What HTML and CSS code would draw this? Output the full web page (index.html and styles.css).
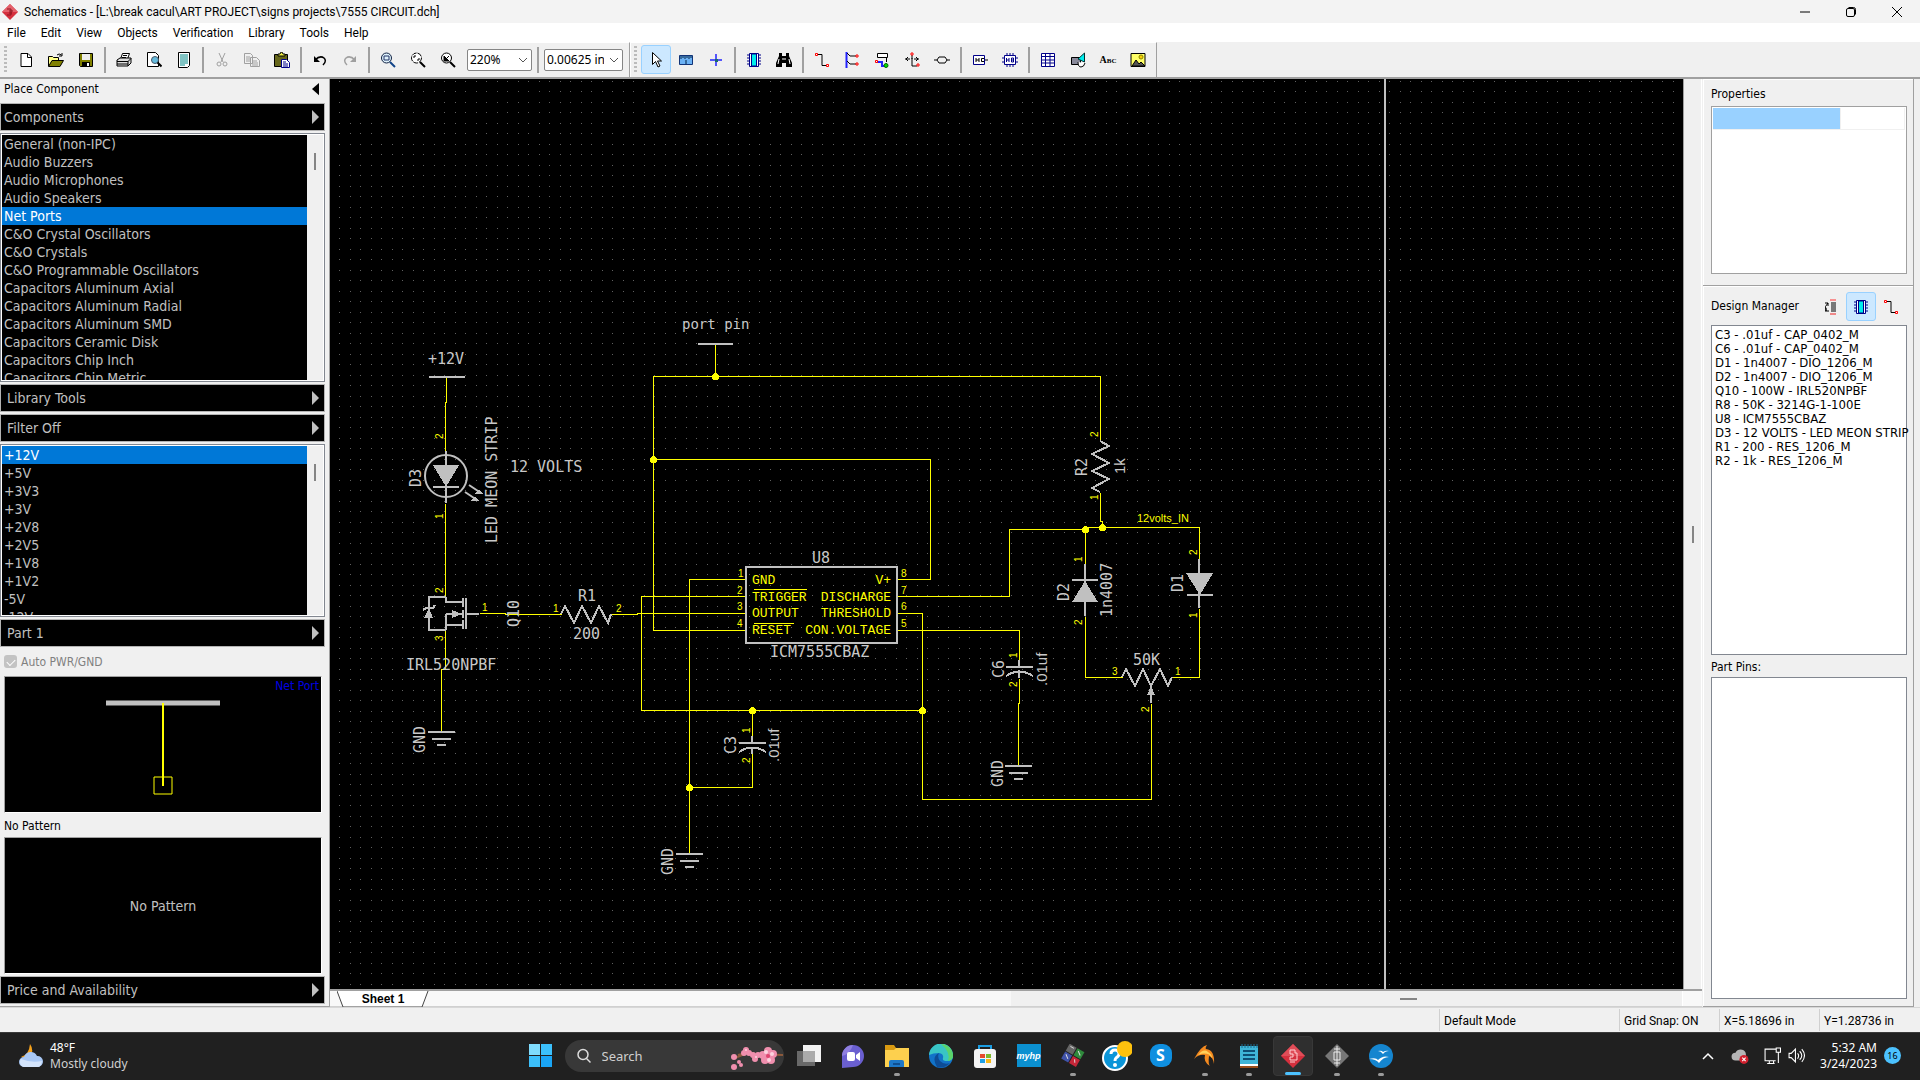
FILE: index.html
```html
<!DOCTYPE html>
<html lang="en">
<head>
<meta charset="utf-8">
<title>Schematics - 7555 CIRCUIT.dch</title>
<link rel="stylesheet" href="styles.css">
</head>
<body>
<header class="titlebar">
  <svg class="logo" viewBox="0 0 16 16"><path d="M8 0l8 8-8 8-8-8z" fill="#d5303e"/><path d="M8 0l8 8H0z" fill="#e4606a"/><path d="M5 5h4v6H5M7 7h4M7 9h3" fill="none" stroke="#8d1420"/></svg>
  <h1>Schematics - [L:\break cacul\ART PROJECT\signs projects\7555 CIRCUIT.dch]</h1>
  <div class="winctl">
    <button aria-label="Minimize"><svg viewBox="0 0 12 12"><path d="M1 6h10"/></svg></button>
    <button aria-label="Restore"><svg viewBox="0 0 12 12"><path d="M1.500 4q0-1.500 1.500-1.500h5q1.500 0 1.500 1.500v5q0 1.500-1.500 1.500h-5q-1.500 0-1.500-1.500zM3.500 1.500h5q2 0 2 2v5"/></svg></button>
    <button aria-label="Close"><svg viewBox="0 0 12 12"><path d="M1 1l10 10M11 1L1 11"/></svg></button>
  </div>
</header>
<nav class="menubar">
  <a href="#">File</a><a href="#">Edit</a><a href="#">View</a><a href="#">Objects</a><a href="#">Verification</a><a href="#">Library</a><a href="#">Tools</a><a href="#">Help</a>
</nav>
<div class="toolbars">
  <div class="toolbar">
    <i class="grip"></i>
    <button aria-label="New"><svg viewBox="0 0 16 16"><path d="M3 1.500h7l3.500 3.500v9.500H3z" fill="#fff" stroke="#000"/><path d="M9.500 1.500v4h4" fill="none" stroke="#000"/></svg></button>
    <button aria-label="Open"><svg viewBox="0 0 16 16"><path d="M.500 14V4.500h4l1 1h5V8" fill="#ff8" stroke="#000"/><path d="M.500 14.500L4 8.500h11.500l-3.500 6z" fill="#808000" stroke="#000"/><path d="M9 3q2-2 4.500 0M14 1v3h-3" fill="none" stroke="#000"/></svg></button>
    <button aria-label="Save"><svg viewBox="0 0 16 16"><path d="M1.500 1.500h13v13h-12l-1-1z" fill="#808000" stroke="#000"/><path d="M4 2h8v6H4z" fill="#eee"/><path d="M4 10h8v4H4z"/><path d="M9 11h2v3H9z" fill="#fff"/></svg></button>
    <i class="sep"></i>
    <button aria-label="Print"><svg viewBox="0 0 16 16"><path d="M4.500 7l2-5.500h7L11.500 7" fill="#fff" stroke="#000"/><path d="M1 8l3-2h11v5l-3 3H1z" fill="#ddd" stroke="#000"/><path d="M1 9.500h11l3-3M1 12h11M12 9v5M7 3.500h4M6 5.500h4" fill="none" stroke="#000"/></svg></button>
    <button aria-label="Print preview"><svg viewBox="0 0 16 16"><path d="M1.500.500h8l3 3v11h-11z" fill="#fff" stroke="#000"/><circle cx="9" cy="8" r="3.500" fill="#6bd" stroke="#456"/><path d="M11.500 10.500l4 4" stroke="#000" stroke-width="2"/></svg></button>
    <button aria-label="Titles"><svg viewBox="0 0 16 16"><path d="M2.500.500h11v13l-2 2h-9z" fill="#fff" stroke="#000"/><path d="M4 3h8M4 5h8M4 7h8M4 9h8M4 11h8M4 13h5" stroke="#088"/></svg></button>
    <i class="sep"></i>
    <button aria-label="Cut" disabled><svg viewBox="0 0 16 16"><g fill="none" stroke="#a0a0a0"><path d="M5 1l4 9M11 1L7 10"/><circle cx="5" cy="12" r="2"/><circle cx="11" cy="12" r="2"/></g></svg></button>
    <button aria-label="Copy" disabled><svg viewBox="0 0 16 16"><g fill="#f0f0f0" stroke="#a0a0a0"><path d="M.500 1.500h6l2 2v8h-8zM6.500 5.500h6l3 3v6h-9z"/><path d="M2 5h4M2 7h4M2 9h4M8 9h5M8 11h6M8 13h6"/></g></svg></button>
    <button aria-label="Paste"><svg viewBox="0 0 16 16"><path d="M.500 2.500h13v12H.500z" fill="#66661a" stroke="#000"/><path d="M4 4V2h2l1-2h1l1 2h2v2z" fill="#ee4" stroke="#000"/><path d="M7.500 7.500h5l3 3v5h-8z" fill="#fff" stroke="#008"/><path d="M9 10h3M9 12h5M9 14h5" stroke="#008"/></svg></button>
    <i class="sep"></i>
    <button aria-label="Undo"><svg viewBox="0 0 16 16"><path d="M3 8q5-5 9-2 3 3-1 7" fill="none" stroke="#000" stroke-width="1.500"/><path d="M2 4v6h6z"/></svg></button>
    <button aria-label="Redo" disabled><svg viewBox="0 0 16 16"><path d="M13 8q-5-5-9-2-3 3 1 7" fill="none" stroke="#a0a0a0" stroke-width="1.500"/><path d="M14 4v6H8z" fill="#a0a0a0"/></svg></button>
    <i class="sep"></i>
    <button aria-label="Zoom window"><svg viewBox="0 0 16 16"><circle cx="6.500" cy="6" r="5" fill="#dff2fb" stroke="#124"/><path d="M4 4h5v4H4z" fill="none" stroke="#236"/><path d="M10 10l5 5" stroke="#148" stroke-width="2"/></svg></button>
    <button aria-label="Zoom all"><svg viewBox="0 0 16 16"><circle cx="6.500" cy="6" r="5" fill="#fff" stroke="#000" stroke-dasharray="5 1"/><path d="M4 6V4h2M9 6v2H7" fill="none" stroke="#000"/><path d="M10 10l5 5" stroke="#000" stroke-width="2"/></svg></button>
    <button aria-label="Zoom previous"><svg viewBox="0 0 16 16"><circle cx="6.500" cy="6" r="5" fill="#fff" stroke="#000"/><path d="M4 4v5h5zM5 8l4-4" stroke="#000"/><path d="M10 10l5 5" stroke="#000" stroke-width="2"/></svg></button>
    <div class="combo zoomlevel"><select aria-label="Zoom"><option>220%</option></select><svg viewBox="0 0 10 6"><path d="M1 1l4 4 4-4"/></svg></div>
    <i class="sep"></i>
    <div class="combo gridstep"><select aria-label="Grid size"><option>0.00625 in</option></select><svg viewBox="0 0 10 6"><path d="M1 1l4 4 4-4"/></svg></div>
  </div>
  <div class="toolbar">
    <i class="grip"></i>
    <button class="on" aria-label="Select"><svg viewBox="0 0 16 16"><path d="M4.500.500v12l3-3 2.500 5.500 2-1-2.500-5h4z" fill="#fff" stroke="#000"/></svg></button>
    <button aria-label="Measure"><svg viewBox="0 0 16 16"><path d="M1.500 3.500h13v9h-13z" fill="#6cb2f5" stroke="#137"/><path d="M3 4v3M5 4v2M7 4v3M9 4v2M11 4v3M13 4v2M8 8v4" stroke="#024"/></svg></button>
    <button aria-label="Set origin"><svg viewBox="0 0 16 16"><path d="M2 8h12M8 2v12" stroke="#22f" stroke-width="1.500"/><path d="M7 7h3v3H7z" fill="#186b6b"/></svg></button>
    <i class="sep"></i>
    <button aria-label="Place component"><svg viewBox="0 0 16 16"><use href="#chip"/></svg></button>
    <button aria-label="Find component"><svg viewBox="0 0 16 16"><path d="M3 1h3v3h4V1h3v3l3 7v4h-6v-4H6v4H0v-4l3-7z"/><path d="M3 7l-1 5M13 7l1 5M7 6v2M9 6v2" stroke="#fff"/></svg></button>
    <i class="sep"></i>
    <button aria-label="Place wire"><svg viewBox="0 0 16 16"><use href="#wire"/></svg></button>
    <button aria-label="Place bus"><svg viewBox="0 0 16 16"><path d="M2.500 0v16" stroke="#22f" stroke-width="2"/><path d="M3 1l3 3h6M3 9l3 3h6" stroke="#000" fill="none"/><path d="M12 3h2v2h-2zM12 11h2v2h-2z" fill="#fff" stroke="red"/></svg></button>
    <button aria-label="Bus connection"><svg viewBox="0 0 16 16"><path d="M3.500 1.500h10v4h-10zM12.500 6v4" fill="#fff" stroke="#000"/><path d="M3 10h5v4h3" fill="none" stroke="#22f" stroke-width="2"/><path d="M1.500 8.500h2v2h-2z" fill="#fff" stroke="red"/><circle cx="12" cy="13.500" r="2" fill="#0d0" stroke="#060"/></svg></button>
    <button aria-label="Net port"><svg viewBox="0 0 16 16"><path d="M8 2v5M1 7h5M15 7h-5M8 6v8h5M4 5L2 7l2 2M12 5l2 2-2 2" fill="none" stroke="#000"/><path d="M7 1h2v2H7zM13 12h2v2h-2z" fill="#fff" stroke="red"/></svg></button>
    <button aria-label="Connector"><svg viewBox="0 0 16 16"><path d="M0 8h3l2-3h6l2 3h3M3 8l2 3h6l2-3" fill="none" stroke="#000"/></svg></button>
    <i class="sep"></i>
    <button aria-label="Hierarchy connector"><svg viewBox="0 0 16 16"><path d="M1.500 3.500h11v9h-11z" fill="#fff" stroke="#008"/><path d="M13 8h3M4 6v4M7 6v4M4 8h3M12 6.500H9.500v3H12" fill="none" stroke="#000"/></svg></button>
    <button aria-label="Hierarchy block"><svg viewBox="0 0 16 16"><path d="M2.500 3.500h11v9h-11z" fill="#fff" stroke="#008"/><path d="M5 1v2M8 1v2M11 1v2M5 13v2M8 13v2M11 13v2M0 6h2M0 10h2M14 6h2M14 10h2M4.500 6v4M7 6v4M4.500 8H7M9.500 6v4h2V6zM9 8h3" fill="none" stroke="#008"/></svg></button>
    <i class="sep"></i>
    <button aria-label="Table"><svg viewBox="0 0 16 16"><path d="M1.500 1.500h13v13h-13zM1.500 4.500h13M1.500 8h13M1.500 11h13M5.500 1.500v13M10 1.500v13" fill="#fff" stroke="#008"/></svg></button>
    <button aria-label="Shape"><svg viewBox="0 0 16 16"><path d="M1.500 5.500h9v7h-9z" fill="#889" stroke="#000"/><path d="M14.500 1v9L8 7z" fill="#0ee" stroke="#033"/><path d="M8 10q0 5 3 5t4-4" fill="#fff" stroke="#000"/></svg></button>
    <button class="abc">Abc</button>
    <button aria-label="Picture"><svg viewBox="0 0 16 16"><path d="M1 1.500h14v13H1z" fill="#ff6" stroke="#000"/><circle cx="11" cy="5" r="2" fill="#fc0" stroke="#880"/><path d="M2 14l4-6 3 4 2-2 4 4z" fill="#555" stroke="#000"/></svg></button>
  </div>
</div>

<main class="workspace">
  <aside class="place">
    <h2>Place Component <svg viewBox="0 0 8 14"><path d="M8 0v14L0 7z"/></svg></h2>
    <button class="drop first">Components<svg viewBox="0 0 7 14"><path d="M0 0l7 7-7 7z"/></svg></button>
    <div class="listbox libs">
      <ul role="listbox" aria-label="Components">
        <li>General (non-IPC)</li><li>Audio Buzzers</li><li>Audio Microphones</li><li>Audio Speakers</li><li class="sel">Net Ports</li><li>C&amp;O Crystal Oscillators</li><li>C&amp;O Crystals</li><li>C&amp;O Programmable Oscillators</li><li>Capacitors Aluminum Axial</li><li>Capacitors Aluminum Radial</li><li>Capacitors Aluminum SMD</li><li>Capacitors Ceramic Disk</li><li>Capacitors Chip Inch</li><li>Capacitors Chip Metric</li>
      </ul>
      <div class="track"><i></i></div>
    </div>
    <button class="drop">Library Tools<svg viewBox="0 0 7 14"><path d="M0 0l7 7-7 7z"/></svg></button>
    <button class="drop">Filter Off<svg viewBox="0 0 7 14"><path d="M0 0l7 7-7 7z"/></svg></button>
    <div class="listbox parts">
      <ul role="listbox" aria-label="Parts">
        <li class="sel">+12V</li><li>+5V</li><li>+3V3</li><li>+3V</li><li>+2V8</li><li>+2V5</li><li>+1V8</li><li>+1V2</li><li>-5V</li><li>-12V</li>
      </ul>
      <div class="track"><i></i></div>
    </div>
    <button class="drop">Part 1<svg viewBox="0 0 7 14"><path d="M0 0l7 7-7 7z"/></svg></button>
    <label class="auto"><input type="checkbox" checked disabled>Auto PWR/GND</label>
    <div class="preview symbol">
      <span>Net Port</span>
      <svg viewBox="0 0 120 96"><path d="M3 4h114" stroke="#c0c0c0" stroke-width="5"/><path d="M60 4v83" stroke="#ff0" stroke-width="2"/><path d="M51 78h18v17H51z" fill="none" stroke="#ff0"/></svg>
    </div>
    <p class="caption">No Pattern</p>
    <div class="preview pattern">No Pattern</div>
    <button class="drop last">Price and Availability<svg viewBox="0 0 7 14"><path d="M0 0l7 7-7 7z"/></svg></button>
  </aside>

  <section class="editor">
    <svg class="canvas" role="img" aria-label="7555 circuit schematic">
      <defs>
        <pattern id="dots" width="21" height="21" patternUnits="userSpaceOnUse">
          <path d="M3 7h1v1H3zM14 7h1v1h-1zM3 18h1v1H3zM14 18h1v1h-1z" fill="#606060"/>
        </pattern>
        <g id="chip"><path d="M1 3h14M1 6h14M1 9h14M1 12h14" stroke="#008" stroke-width="1"/><path d="M3.500 1.500h9v13h-9z" fill="#fff" stroke="#008"/><path d="M5.500 2h5v12h-5z" fill="#0ee" stroke="#008"/></g>
        <g id="wire"><path d="M3 2.500h5v11h5" fill="none" stroke="#000"/><path d="M1.500 1.500h2v2h-2zM12.500 12.500h2v2h-2z" fill="#fff" stroke="red"/></g>
        <g id="ground"><path d="M-13 0h27M-9 7h19M-4 13h9"/></g>
        <g id="cap"><path d="M0-7v7M-13 0h27M0 4v7"/><path d="M-13 9q13-9 27 0" fill="none"/></g>
      </defs>
      <g transform="translate(-330 -79)"><rect x="330" y="79" width="4000" height="3000" fill="url(#dots)"/></g>
      <g class="wires" transform="translate(-329.500 -78.500)">
        <path d="M446 377v25h-1v48M445 503v93M445 630v39h-4v62M479 613h26v1h56M611 614h26v-1h109"/>
        <path d="M715 344v32M746 630h-93V376h447v65M653 459h277v120h-33M746 579h-57v274M746 596h-105v114h281"/>
        <path d="M752 710v27M752 752v35h-63M897 596h112v-67h76v-2h114v32M1100 492v29h2v6M1085 529v35M1085 616v61h37M1172 677h27v-69"/>
        <path d="M897 613h25v186h229v-96M897 630h122v30M1019 678v25h-1v63"/>
        <path d="M753 589h53M753 623h40"/>
        <g class="dots"><circle cx="715" cy="376" r="3"/><circle cx="653" cy="459" r="3"/><circle cx="752" cy="710" r="3"/><circle cx="922" cy="710" r="3"/><circle cx="689" cy="787" r="3"/><circle cx="1085" cy="529" r="3"/><circle cx="1102" cy="527" r="3"/></g>
      </g>
      <g transform="translate(-330 -79)">
        <path class="edge" d="M1385 79v3000"/>
        <g class="symbols">
          <path d="M429 377h36M698 344h35"/>
          <path d="M446 451v52M433 487h26"/>
          <g class="smooth"><circle cx="446" cy="476" r="21"/><path d="M469 485l12 8M465 492l12 8"/></g>
          <path class="solid" d="M433 465h26l-13 22zM483 494l-8 0 4-5zM479 501l-8 0 4-5z"/>
          <path d="M446 597h-17v33h17M446 597v5h17M463 598v9M446 614v16M446 614h17M446 625h17M463 620v9M463 610v8M466 598v31M466 614h13"/>
          <path class="solid" d="M452 610v8l10-4zM429 608l-5 10h9z"/><path d="M423 610l3-2h7l2-3"/>
          <path d="M561 614l4-8 9 17 8-17 9 17 8-17 9 17 3-9"/>
          <path d="M746 567h151v76H746z"/>
          <path d="M1100 441l9 5-17 8 17 9-17 8 17 8-17 9 8 4"/>
          <path d="M1085 564v52M1072 580h26M1199 559v49M1187 595h26"/>
          <path class="solid" d="M1085 581l13 21h-26zM1186 573h27l-13 22z"/>
          <path d="M1122 677l4-8 9 17 8-17 8 17 9-17 8 17 4-9M1151 686v17"/><path class="solid" d="M1151 686l4 9h-8z"/>
          <use href="#ground" x="441" y="732"/><use href="#ground" x="689" y="854"/><use href="#ground" x="1018" y="766"/>
          <use href="#cap" x="752" y="743"/><use href="#cap" x="1019" y="667"/>
        </g>
        <g class="ref">
          <text x="428" y="364">+12V</text><text x="510" y="472">12 VOLTS</text><text x="578" y="601">R1</text><text x="573" y="639">200</text><text x="406" y="670">IRL520NPBF</text>
          <text class="port" x="682" y="329">port pin</text><text x="812" y="563">U8</text><text x="770" y="657">ICM7555CBAZ</text><text x="1133" y="665">50K</text>
          <text transform="translate(421 487) rotate(-90)">D3</text><text transform="translate(497 543) rotate(-90)">LED MEON STRIP</text><text transform="translate(519 627) rotate(-90)">Q10</text><text transform="translate(425 753) rotate(-90)">GND</text>
          <text transform="translate(736 754) rotate(-90)">C3</text><text class="val" transform="translate(779 762) rotate(-90)">.01uf</text><text transform="translate(673 875) rotate(-90)">GND</text>
          <text transform="translate(1087 476) rotate(-90)">R2</text><text class="val" transform="translate(1125 474) rotate(-90)">1k</text><text transform="translate(1069 601) rotate(-90)">D2</text><text transform="translate(1112 617) rotate(-90)">1n4007</text><text transform="translate(1183 592) rotate(-90)">D1</text>
          <text transform="translate(1004 678) rotate(-90)">C6</text><text class="val" transform="translate(1047 686) rotate(-90)">.01uf</text><text transform="translate(1003 787) rotate(-90)">GND</text>
        </g>
        <g class="pinname">
          <text x="752" y="584">GND</text><text x="752" y="601">TRIGGER</text><text x="752" y="617">OUTPUT</text><text x="752" y="634">RESET</text>
          <g text-anchor="end"><text x="891" y="584">V+</text><text x="891" y="601">DISCHARGE</text><text x="891" y="617">THRESHOLD</text><text x="891" y="634">CON.VOLTAGE</text></g>
        </g>
        <g class="pin">
          <text x="738" y="577">1</text><text x="737" y="594">2</text><text x="737" y="610">3</text><text x="737" y="627">4</text>
          <text x="901" y="577">8</text><text x="901" y="594">7</text><text x="901" y="610">6</text><text x="901" y="627">5</text>
          <text x="482" y="611">1</text><text x="553" y="612">1</text><text x="616" y="612">2</text><text x="1112" y="675">3</text><text x="1175" y="675">1</text><text class="net" x="1137" y="522">12volts_IN</text>
          <text transform="translate(443 439) rotate(-90)">2</text><text transform="translate(443 519) rotate(-90)">1</text><text transform="translate(443 593) rotate(-90)">2</text><text transform="translate(443 641) rotate(-90)">3</text>
          <text transform="translate(750 733) rotate(-90)">1</text><text transform="translate(750 763) rotate(-90)">2</text><text transform="translate(1098 437) rotate(-90)">2</text><text transform="translate(1098 500) rotate(-90)">1</text>
          <text transform="translate(1082 562) rotate(-90)">1</text><text transform="translate(1082 625) rotate(-90)">2</text><text transform="translate(1197 555) rotate(-90)">2</text><text transform="translate(1197 618) rotate(-90)">1</text>
          <text transform="translate(1017 658) rotate(-90)">1</text><text transform="translate(1017 687) rotate(-90)">2</text><text transform="translate(1149 712) rotate(-90)">2</text>
        </g>
      </g>
    </svg>
    <div class="vtrack"><i></i></div>
    <div class="tabstrip">
      <button class="tab"><svg viewBox="0 0 92 17"><path d="M0 0l6 16h79l6-16" fill="#fff" stroke="#444"/></svg><span>Sheet 1</span></button>
      <div class="htrack"><i></i></div>
    </div>
  </section>

  <aside class="side">
    <section class="panel">
      <h2>Properties</h2>
      <div class="props"><div class="proprow"><span></span><span></span></div></div>
    </section>
    <section class="panel manager">
      <div class="managerhead">
        <h2>Design Manager</h2>
        <button aria-label="Sort"><svg viewBox="0 0 16 16"><path d="M7 1h6" stroke="#f33"/><path d="M8 4h5M8 6h5M8 8h5M8 10h5M8 12h5" stroke="#000"/><path d="M7 15h6" stroke="#e22"/><path d="M5 4q-4 3-2 8M5 4H2M5 4v3M2 12h4M3 12v-3" fill="none" stroke="#000"/></svg></button>
        <button class="on" aria-label="Components"><svg viewBox="0 0 16 16"><use href="#chip"/></svg></button>
        <button aria-label="Nets"><svg viewBox="0 0 16 16"><use href="#wire"/></svg></button>
      </div>
      <ul class="box comps" aria-label="Components">
        <li>C3 - .01uf - CAP_0402_M</li><li>C6 - .01uf - CAP_0402_M</li><li>D1 - 1n4007 - DIO_1206_M</li><li>D2 - 1n4007 - DIO_1206_M</li><li>Q10 - 100W - IRL520NPBF</li><li>R8 - 50K - 3214G-1-100E</li><li>U8 - ICM7555CBAZ</li><li>D3 - 12 VOLTS - LED MEON STRIP</li><li>R1 - 200 - RES_1206_M</li><li>R2 - 1k - RES_1206_M</li>
      </ul>
      <h2>Part Pins:</h2>
      <ul class="box pins" aria-label="Part pins"></ul>
    </section>
  </aside>
</main>

<footer class="status">
  <span class="mode">Default Mode</span><span>Grid Snap: ON</span><span>X=5.18696 in</span><span>Y=1.28736 in</span>
</footer>

<div class="taskbar">
  <div class="weather">
    <svg viewBox="0 0 26 26"><path d="M12 1q5 7-1 12-4 3-8 1 8-2 9-13z" fill="#f6a21c"/><path d="M6 24a5 5 0 010-10 7 7 0 0113-1 5.500 5.500 0 011 11z" fill="#a9c8f5"/><path d="M6 24a5 5 0 01-3-8q10 4 21 2-1 6-4 6z" fill="#d4e4fb"/></svg>
    <div><b>48°F</b><span>Mostly cloudy</span></div>
  </div>
  <div class="apps">
    <button aria-label="Start"><svg viewBox="0 0 24 24"><path d="M1 0h11v11H1zM13 0h11v11H13zM1 12h11v11H1zM13 12h11v11H13z" fill="#3cc0fb"/><path d="M13 12h11v11H13z" fill="#1aa5f5"/><path d="M1 0h11v11H1z" fill="#7fdcfd"/></svg></button>
    <label class="search">
      <svg class="lens" viewBox="0 0 16 16"><circle cx="7" cy="6.500" r="5" fill="none" stroke="#ddd" stroke-width="1.500"/><path d="M10.500 10.500l4 4" stroke="#ddd" stroke-width="1.500"/></svg>
      <input type="text" placeholder="Search" aria-label="Search">
      <svg class="blossom" viewBox="0 0 52 32"><path d="M52 15q-16-1-26 0-6-4-19 0M16 13L4 18" fill="none" stroke="#8d5a3c" stroke-width="2"/><g fill="#f08fae"><circle cx="37" cy="11" r="4"/><circle cx="32" cy="15" r="4"/><circle cx="42" cy="14" r="4"/><circle cx="34" cy="20" r="4"/><circle cx="40" cy="20" r="4"/><circle cx="15" cy="10" r="3"/><circle cx="18" cy="13" r="3"/><circle cx="13" cy="13" r="3"/><circle cx="24" cy="19" r="3"/><circle cx="27" cy="15" r="3"/><circle cx="22" cy="15" r="3"/><circle cx="3" cy="17" r="3"/><circle cx="3" cy="27" r="3"/><circle cx="10" cy="25" r="2"/><circle cx="8" cy="22" r="2"/></g><g fill="#fcd3de"><circle cx="35" cy="12" r="2"/><circle cx="41" cy="14" r="2"/><circle cx="15" cy="10" r="1"/><circle cx="25" cy="17" r="1"/><circle cx="38" cy="20" r="2"/></g><circle cx="37" cy="16" r="2" fill="#e0446f"/></svg>
    </label>
    <button aria-label="Task view"><svg viewBox="0 0 24 24"><path d="M6 1h18v17H6z" fill="#f2f2f2"/><path d="M0 7h18v15H0z" fill="#777" opacity=".85"/><path d="M6 7h12v11H6z" fill="#aaa"/></svg></button>
    <button aria-label="Chat"><svg viewBox="0 0 24 24"><path d="M1 24V12a11 11 0 1111 11z" fill="#6a5fd0"/><path d="M1 12A11 11 0 0112 1q-3 9-11 11z" fill="#8f7fe0"/><rect x="6" y="8" width="8" height="9" rx="2" fill="#fff"/><path d="M15 11l4-3v9l-4-3z" fill="#fff"/></svg></button>
    <button class="run" aria-label="File Explorer"><svg viewBox="0 0 24 24"><path d="M0 1h9l2 3h13v19H0z" fill="#d99a11"/><path d="M0 6h9l2-2h13v19H0z" fill="#fdd04e"/><path d="M4 23v-5q0-2 2-2h11q2 0 2 2v5z" fill="#1d78c8"/><path d="M8 20h7" stroke="#0f4f91" stroke-width="2"/></svg></button>
    <button aria-label="Edge"><svg viewBox="0 0 24 24"><circle cx="12" cy="12" r="12" fill="#1273c9"/><path d="M0 11A12 12 0 0124 12q0 5-6 5-5 0-4-3 1-4-4-5-6 0-10 2z" fill="#39c5c5"/><path d="M12 0a12 12 0 0112 12q0 4-5 5 3-9-7-17z" fill="#5bd46a"/><path d="M10 9q-8 4-2 14 7 2 13-4-6 2-10-2-3-4-1-8z" fill="#0d4c96"/></svg></button>
    <button aria-label="Store"><svg viewBox="0 0 24 24"><path d="M6 7V2h12v5" fill="none" stroke="#1b9de2" stroke-width="2"/><rect y="5" x="1" width="22" height="19" rx="3" fill="#f4f4f4"/><path d="M7 10h5v4H7z" fill="#e6492d"/><path d="M13 10h5v4h-5z" fill="#7db82b"/><path d="M7 15h5v4H7z" fill="#1d9fe6"/><path d="M13 15h5v4h-5z" fill="#f8b715"/></svg></button>
    <button class="hp">myhp</button>
    <button class="run" aria-label="Tiles"><svg viewBox="0 0 24 24"><g transform="rotate(30 12 12)"><path d="M3 3h8v8H3z" fill="#666"/><path d="M12 3h8v8h-8z" fill="#2f8a3c"/><path d="M3 12h8v8H3z" fill="#4052a8"/><path d="M12 12h8v8h-8z" fill="#c52638"/><path d="M5 5h4M14 5l4 3M5 14l4 3M15 14l2 3" stroke="#ddd"/></g></svg></button>
    <button aria-label="Help"><svg class="wide" viewBox="0 0 30 30"><circle cx="13" cy="17" r="12" fill="#0b95d8" stroke="#fff" stroke-width="2"/><path d="M9 13q0-4 4-4t4 4q0 2-3 4-1 1-1 3" fill="none" stroke="#fff" stroke-width="3"/><circle cx="13" cy="24" r="2" fill="#fff"/><circle cx="23" cy="8" r="8" fill="#ffc20e"/></svg></button>
    <button class="skype" aria-label="Skype"><span>S</span></button>
    <button class="run" aria-label="Phoenix"><svg viewBox="0 0 24 24"><path d="M1 15Q8 2 14 1q-2 3-1 4 9 1 8 15-1-7-5-8-1 8 1 10-7-4-5-11-6-1-11 4z" fill="#f58a1f"/><path d="M5 11q6-7 10-3 4 2 4 6-4-7-14-3z" fill="#ffd05a"/></svg></button>
    <button class="run" aria-label="Notepad"><svg viewBox="0 0 24 24"><path d="M3 2h18v20H3z" fill="#3fb5d8"/><path d="M3 20h18v2H3z" fill="#fff"/><path d="M3 22h18v2H3z" fill="#9a4f1c"/><path d="M5 0v4M8 0v4M11 0v4M14 0v4M17 0v4M20 0v4" stroke="#1a6f93"/><path d="M6 7h12M6 11h12M6 15h12" stroke="#0e4f75" stroke-width="2"/></svg></button>
    <button class="run active" aria-label="Schematics"><svg viewBox="0 0 24 24"><path d="M12 0l12 12-12 12L0 12z" fill="#d5303e"/><path d="M12 0l12 12H0z" fill="#e04d58"/><path d="M9 6h5v3h2v7H9v-3h3v-3H9zM9 18h5" fill="none" stroke="#ffd0d3"/></svg></button>
    <button class="run" aria-label="Component editor"><svg viewBox="0 0 24 24"><path d="M12 0l12 12-12 12L0 12z" fill="#777"/><path d="M12 2v20M9 8h6v8H9zM9 5h6M9 19h6" fill="none" stroke="#eee"/></svg></button>
    <button class="run" aria-label="OpenOffice"><svg viewBox="0 0 24 24"><circle cx="12" cy="12" r="12" fill="#1585cf"/><path d="M9 7q4-1 5 1 3-2 6-1-4 0-6 3-2-3-5-3zM0 15q7-2 9 1 5-5 11-3-6 0-10 6-3-4-10-4z" fill="#fff"/></svg></button>
  </div>
  <div class="tray">
    <svg class="chev" viewBox="0 0 12 12"><path d="M1 9l5-5 5 5" fill="none" stroke="#fff" stroke-width="1.500"/></svg>
    <svg class="cloud" viewBox="0 0 16 16"><path d="M4 12a3.500 3.500 0 010-7 5 5 0 019 0l1 7z" fill="#b5b5b5"/><circle cx="11.500" cy="11" r="4" fill="#d0202e"/><path d="M10 9.500l3 3M13 9.500l-3 3" stroke="#fff"/></svg>
    <svg class="net" viewBox="0 0 16 16"><path d="M11 2H1v11h10M3 15.500h7M5 13v2M9 13v2M11.500 1h4v4h-4zM13.500 5v10" fill="none" stroke="#fff"/></svg>
    <svg class="vol" viewBox="0 0 16 16"><path d="M1 6h2l4-4v12l-4-4H1zM9 6q2 2 0 5M11 4q4 4 0 8M13 2q5 6 0 12" fill="none" stroke="#fff"/></svg>
    <div class="clock"><span>5:32 AM</span><span>3/24/2023</span></div>
    <span class="badge">16</span>
  </div>
</div>
</body>
</html>
```
FILE: styles.css
```css
* { box-sizing: border-box; }
body {
  margin: 0;
  min-height: 100vh;
  display: flex;
  flex-direction: column;
  background: #f0f0f0;
  color: #000;
  font: 12px/14px "DejaVu Sans Condensed", "DejaVu Sans", sans-serif;
  overflow: hidden;
}
h1, h2, p, ul { margin: 0; padding: 0; font: inherit; }
ul { list-style: none; }
button, input, select { font: inherit; color: inherit; }
button { border: 0; padding: 0; background: none; }
svg { display: block; flex: none; }

.titlebar, .menubar, .status {
  font-family: Roboto, "Noto Sans", sans-serif;
}

/* Title bar and menu */
.titlebar {
  height: 23px;
  display: flex;
  align-items: center;
  background: #f3f3f3;
}
.logo { width: 16px; height: 16px; margin: 0 6px 0 2px; }
.titlebar h1 { flex: 1; }
.winctl { display: flex; }
.winctl button { width: 46px; display: flex; justify-content: center; }
.winctl svg { width: 12px; height: 12px; fill: none; stroke: #000; }
.menubar {
  height: 19px;
  display: flex;
  align-items: center;
  gap: 15px;
  padding-left: 7px;
  background: #fff;
}
.menubar a { color: inherit; text-decoration: none; }

/* Toolbars */
.toolbars {
  height: 37px;
  display: flex;
  border-bottom: 2px solid #a0a0a0;
}
.toolbar {
  display: flex;
  align-items: center;
  border-top: 1px solid #fff;
  border-right: 1px solid #a0a0a0;
  padding: 0 3px 1px 0;
}
.toolbar:first-child { padding-left: 1px; padding-right: 2px; }
.toolbar + .toolbar { border-left: 1px solid #fff; }
.grip {
  width: 3px;
  height: 28px;
  margin: 0 4px 0 3px;
  background: repeating-linear-gradient(#bbb 0 2px, transparent 2px 4px);
}
.toolbar button, .managerhead button {
  width: 30px;
  height: 29px;
  display: flex;
  align-items: center;
  justify-content: center;
}
.toolbar button svg, .managerhead svg { width: 16px; height: 16px; }
.toolbar button.on, .managerhead .on {
  background: #cce8ff;
  border: 1px solid #99d1ff;
  border-radius: 3px;
}
.toolbar .abc { font: bold 10px "Liberation Serif", serif; font-variant: small-caps; }
.sep { width: 2px; height: 26px; margin: 0 3px; background: #a0a0a0; }
.combo {
  display: grid;
  height: 22px;
  align-items: center;
  border: 1px solid #858585;
  border-radius: 2px;
  background: #fff;
  font-family: "Noto Sans", sans-serif;
}
.combo select {
  grid-area: 1 / 1;
  width: 100%;
  height: 20px;
  appearance: none;
  border: 0;
  background: none;
  padding: 0 18px 0 2px;
}
.combo svg {
  grid-area: 1 / 1;
  justify-self: end;
  width: 10px;
  height: 6px;
  margin-right: 3px;
  fill: none;
  stroke: #555;
  pointer-events: none;
}
.zoomlevel { width: 65px; margin: 0 2px 0 4px; }
.gridstep { width: 79px; margin: 0 4px 0 2px; }

/* Workspace columns */
.workspace { flex: 1; display: flex; min-height: 0; }
.place {
  width: 330px;
  display: flex;
  flex-direction: column;
  gap: 2px;
  padding-right: 4px;
  border-right: 1px solid #a0a0a0;
  border-bottom: 1px solid #a0a0a0;
}
.place h2 {
  height: 21px;
  margin-top: 1px;
  line-height: 18px;
  display: flex;
  justify-content: space-between;
  padding: 0 6px 0 4px;
}
.place h2 svg { width: 7px; height: 14px; margin-top: 2px; }
.drop {
  height: 28px;
  display: flex;
  align-items: center;
  justify-content: space-between;
  padding: 0 5px 0 6px;
  border: 1px solid #b4b4b4;
  background: #000;
  color: #c0c0c0;
  font-size: 14px;
  line-height: 18px;
}
.drop.first { padding-left: 3px; }
.drop svg { width: 7px; height: 14px; fill: #c0c0c0; }
.listbox {
  display: flex;
  border: 1px solid #828790;
  padding: 1px;
  background: #fff;
  min-height: 0;
}
.libs { flex: 250 0 0; }
.parts { flex: 172 0 0; }
.listbox ul {
  flex: 1;
  overflow: hidden;
  background: #000;
  color: #c0c0c0;
  font-size: 14px;
  line-height: 18px;
}
.listbox li { padding-left: 2px; white-space: nowrap; }
.listbox .sel { background: #0078d7; color: #fff; }
.track { width: 16px; background: #f0f0f0; padding-top: 18px; }
.track i { display: block; width: 2px; height: 17px; margin: 0 auto; background: #858585; }
.auto {
  height: 25px;
  display: flex;
  align-items: center;
  gap: 4px;
  padding-left: 4px;
  color: #808080;
}
.auto input {
  appearance: none;
  display: grid;
  place-items: center;
  width: 13px;
  height: 13px;
  margin: 0;
  border-radius: 3px;
  background: #c3c3c3;
}
.auto input::before {
  content: "";
  width: 7px;
  height: 4px;
  border: solid #fff;
  border-width: 0 0 1px 1px;
  transform: rotate(-45deg);
}
.preview {
  height: 137px;
  margin: 0 3px 0 4px;
  border: 1px solid #a0a0a0;
  border-right-color: #fff;
  border-bottom-color: #fff;
  background: #000;
  color: #c0c0c0;
}
.symbol { display: grid; justify-items: center; align-content: start; }
.symbol span { justify-self: end; padding: 2px 2px 0 0; color: #0000e0; }
.symbol svg { width: 120px; height: 96px; margin-top: 6px; }
.pattern {
  display: flex;
  align-items: center;
  justify-content: center;
  font-size: 14px;
}
.caption { height: 20px; line-height: 22px; padding-left: 4px; }
.last { margin-bottom: 2px; }

/* Schematic sheet */
.editor {
  flex: 1;
  min-width: 0;
  display: grid;
  grid-template: minmax(0, 1fr) 18px / minmax(0, 1fr) 19px;
}
.canvas { width: 100%; height: 100%; background: #000; }
.edge { stroke: #c0c0c0; stroke-width: 2; }
.wires, .symbols { shape-rendering: crispEdges; }
.wires { fill: none; stroke: #ff0; }
.dots { fill: #ff0; }
.symbols { fill: none; stroke: #c0c0c0; stroke-width: 2; }
.smooth { shape-rendering: auto; }
.solid { fill: #c0c0c0; stroke: none; }
.ref { fill: #c8c8c8; font: 15px "DejaVu Sans Mono", monospace; }
.ref .port { font-size: 14px; }
.ref .val { font: 15px "Liberation Sans", sans-serif; }
.pinname { fill: #ff0; font: 13px "Liberation Mono", monospace; }
.pin { fill: #ff0; font: 10px "Liberation Sans", sans-serif; }
.pin .net { font-size: 11px; }
.vtrack {
  border-left: 1px solid #a0a0a0;
  border-right: 1px solid #fff;
  display: flex;
  flex-direction: column;
  align-items: center;
}
.vtrack i { width: 2px; height: 17px; margin: 447px 0 0; background: #858585; }
.tabstrip {
  grid-column: 1 / 3;
  display: flex;
  border-top: 2px solid #a0a0a0;
  border-bottom: 1px solid #d0d0d0;
  background: #f8f8f8;
}
.tab { display: grid; margin-left: 7px; font: bold 12px/17px "Liberation Sans", sans-serif; }
.tab svg, .tab span { grid-area: 1 / 1; }
.tab svg { width: 92px; height: 17px; }
.htrack {
  width: 49%;
  margin: 0 19px 0 auto;
  background: #f0f0f0;
  border-right: 1px solid #fff;
}
.htrack i { display: block; width: 17px; height: 2px; margin: 7px 0 0 58%; background: #858585; }

/* Right column */
.side {
  width: 211px;
  margin: 0 6px 0 1px;
  display: flex;
  flex-direction: column;
}
.panel {
  padding: 7px 6px 7px 8px;
  border: 1px solid #a0a0a0;
  border-width: 0 1px 1px 0;
  box-shadow: inset 1px 1px #fff;
}
.panel h2 { height: 20px; line-height: 16px; }
.panel:first-child { height: 207px; }
.props { height: 168px; padding: 1px; border: 1px solid #a0a0a0; background: #fff; }
.proprow { display: grid; grid-template-columns: 2fr 1fr; height: 22px; border-bottom: 1px solid #f0f0f0; }
.proprow span { border-right: 1px solid #f0f0f0; }
.proprow span:first-child { background: #99d1ff; }
.manager { flex: 1; display: flex; flex-direction: column; padding-top: 6px; }
.managerhead { height: 33px; display: flex; padding-right: 1px; }
.managerhead h2 { flex: 1; line-height: 28px; white-space: nowrap; }
.box {
  border: 1px solid #828790;
  background: #fff;
  padding: 2px 0 2px 3px;
  white-space: nowrap;
  font-size: 13px;
}
.comps { flex: 330 0 0; }
.comps li { height: 14px; }
.manager > h2 { height: 22px; line-height: 24px; }
.pins { flex: 322 0 0; }

/* Status bar */
.status {
  height: 25px;
  display: flex;
  justify-content: flex-end;
  align-items: center;
  padding-right: 1px;
  border-top: 1px solid #d7d7d7;
}
.status span { width: 100px; height: 22px; line-height: 24px; padding-left: 4px; border-left: 1px solid #d0d0d0; }
.status .mode { width: 180px; }

/* Taskbar */
.taskbar {
  isolation: isolate;
  height: 48px;
  display: grid;
  grid-template-columns: 1fr auto 1fr;
  align-items: center;
  padding-bottom: 2px;
  border-top: 1px solid #3a3a3a;
  background: #202020;
  color: #fff;
  font: 12px/16px "Noto Sans", sans-serif;
}
.weather { display: flex; align-items: center; gap: 6px; padding-left: 18px; }
.weather svg { width: 26px; height: 36px; }
.weather b { font-weight: 400; display: block; }
.weather span { color: #d0d0d0; }
.apps { display: flex; align-items: center; }
.apps > button {
  position: relative;
  width: 44px;
  height: 45px;
  display: flex;
  align-items: center;
  justify-content: center;
}
.apps > button > svg { width: 24px; height: 24px; }
.apps > button > .wide { width: 30px; height: 30px; }
.run::after {
  content: "";
  position: absolute;
  bottom: 2px;
  left: 19px;
  width: 6px;
  height: 3px;
  border-radius: 2px;
  background: #9a9a9a;
}
.apps > .active {
  width: 40px;
  height: 40px;
  margin: 0 2px;
  background: #2f2f2f;
  border: 1px solid #383838;
  border-radius: 4px;
}
.active::after { left: 11px; bottom: 0; width: 16px; background: #4cc2ff; }
.apps > .hp::before {
  content: "";
  position: absolute;
  inset: 11px 10px;
  background: #0b90d0;
  z-index: -1;
}
.hp { font: italic bold 9px "Liberation Sans", sans-serif; color: #fff; }
.skype span {
  width: 22px;
  height: 23px;
  border-radius: 9px;
  background: #0f8fe0;
  color: #fff;
  font: bold 16px/23px "Noto Sans", sans-serif;
}
.search {
  width: 219px;
  height: 32px;
  margin: 0 3px;
  display: flex;
  align-items: center;
  padding: 0 1px 0 11px;
  border-radius: 16px;
  background: #383838;
}
.lens { width: 16px; height: 16px; }
.search input {
  flex: 1;
  min-width: 0;
  border: 0;
  padding: 0 0 0 10px;
  background: none;
  font-size: 13px;
}
.search input::placeholder { color: #cfcfcf; }
.blossom { width: 52px; height: 32px; }
.tray { display: flex; align-items: center; justify-content: flex-end; padding-right: 19px; }
.chev { width: 12px; height: 12px; margin-right: 17px; }
.cloud { width: 18px; height: 18px; margin-right: 15px; }
.net, .vol { width: 17px; height: 17px; margin-right: 7px; }
.clock { width: 65px; text-align: right; }
.clock span { display: block; }
.badge {
  width: 17px;
  height: 17px;
  margin-left: 7px;
  border-radius: 50%;
  background: #4cc2ff;
  color: #000;
  font-size: 9px;
  line-height: 17px;
  text-align: center;
}
```
